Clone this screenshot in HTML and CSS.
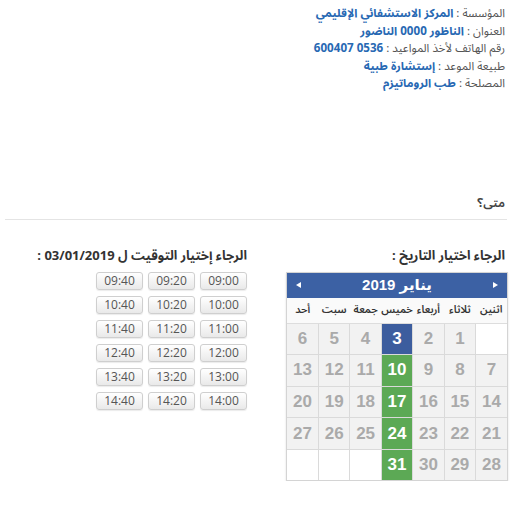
FILE: index.html
```html
<!DOCTYPE html>
<html lang="ar" dir="rtl">
<head>
<meta charset="utf-8">
<title>موعد</title>
<link rel="stylesheet" href="styles.css">
</head>
<body>
<div class="page">
  <div class="info">
    <div class="line"><span class="label">المؤسسة :</span> <span class="value">المركز الاستشفائي الإقليمي</span></div>
    <div class="line"><span class="label">العنوان :</span> <span class="value">الناظور 0000 الناضور</span></div>
    <div class="line"><span class="label">رقم الهاتف لأخذ المواعيد :</span> <span class="value">0536 600407</span></div>
    <div class="line"><span class="label">طبيعة الموعد :</span> <span class="value">إستشارة طبية</span></div>
    <div class="line"><span class="label">المصلحة :</span> <span class="value">طب الروماتيزم</span></div>
  </div>

  <h2 class="when">متى؟</h2>
  <hr class="sep">

  <div class="row">
    <div class="col-date">
      <div class="col-title">الرجاء اختيار التاريخ :</div>
      <div class="calendar">
        <div class="cal-head">
          <span class="arrow arrow-next"></span>
          <span class="cal-title">يناير 2019</span>
          <span class="arrow arrow-prev"></span>
        </div>
        <table class="cal-grid">
          <thead>
            <tr><th>اثنين</th><th>ثلاثاء</th><th>أربعاء</th><th>خميس</th><th>جمعة</th><th>سبت</th><th>أحد</th></tr>
          </thead>
          <tbody>
            <tr><td class="empty"></td><td>1</td><td>2</td><td class="sel">3</td><td>4</td><td>5</td><td>6</td></tr>
            <tr><td>7</td><td>8</td><td>9</td><td class="ok">10</td><td>11</td><td>12</td><td>13</td></tr>
            <tr><td>14</td><td>15</td><td>16</td><td class="ok">17</td><td>18</td><td>19</td><td>20</td></tr>
            <tr><td>21</td><td>22</td><td>23</td><td class="ok">24</td><td>25</td><td>26</td><td>27</td></tr>
            <tr><td>28</td><td>29</td><td>30</td><td class="ok">31</td><td class="empty"></td><td class="empty"></td><td class="empty"></td></tr>
          </tbody>
        </table>
      </div>
    </div>

    <div class="col-time">
      <div class="col-title">الرجاء إختيار التوقيت ل 03/01/2019 :</div>
      <div class="slots">
        <button class="slot">09:00</button><button class="slot">09:20</button><button class="slot">09:40</button>
        <button class="slot">10:00</button><button class="slot">10:20</button><button class="slot">10:40</button>
        <button class="slot">11:00</button><button class="slot">11:20</button><button class="slot">11:40</button>
        <button class="slot">12:00</button><button class="slot">12:20</button><button class="slot">12:40</button>
        <button class="slot">13:00</button><button class="slot">13:20</button><button class="slot">13:40</button>
        <button class="slot">14:00</button><button class="slot">14:20</button><button class="slot">14:40</button>
      </div>
    </div>
  </div>
</div>
</body>
</html>
```

FILE: styles.css
```css
html, body {
  margin: 0;
  padding: 0;
  background: #ffffff;
}

body {
  font-family: "Noto Sans Arabic", "DejaVu Sans", sans-serif;
  color: #333333;
}

.page {
  padding: 5px 14px 0 5px;
}

.info {
  font-size: 11.6px;
  line-height: 17.5px;
}

.info .label {
  color: #555555;
}

.info .value {
  color: #2768b3;
  font-weight: bold;
}

.when {
  margin: 100px 0 0 0;
  font-size: 12.5px;
  line-height: 20px;
  font-weight: 600;
  color: #444444;
}

.sep {
  margin: 6px -2px 0 0;
  border: 0;
  border-top: 1px solid #e4e4e4;
  height: 0;
}

.row {
  display: flex;
  gap: 13px;
  margin-top: 27px;
}

.col-date {
  width: 245px;
}

.col-time {
  flex: 1;
}

.col-title {
  font-size: 13px;
  line-height: 18px;
  font-weight: bold;
  color: #333333;
}

.calendar {
  margin-top: 7px;
  margin-right: -3px;
  margin-left: auto;
  width: 220px;
  border: 1px solid #d4d4d4;
  box-shadow: 0 1px 2px rgba(0, 0, 0, 0.12);
  background: #ffffff;
}

.cal-head {
  height: 25px;
  background: #3c61a4;
  display: flex;
  align-items: center;
  justify-content: space-between;
  padding: 0 9px;
  color: #ffffff;
}

.cal-title {
  font-family: "Liberation Sans", "DejaVu Sans", sans-serif;
  font-weight: bold;
  font-size: 15px;
}

.arrow {
  width: 0;
  height: 0;
  border-top: 3px solid transparent;
  border-bottom: 3px solid transparent;
}

.arrow-next {
  border-left: 5px solid #ffffff;
}

.arrow-prev {
  border-right: 5px solid #ffffff;
}

.cal-grid {
  width: 100%;
  border-collapse: collapse;
  table-layout: fixed;
}

.cal-grid th {
  height: 25px;
  padding: 0;
  font-size: 10.5px;
  font-weight: 600;
  color: #333333;
  background: #fafafa;
  border-bottom: 1px solid #dddddd;
  white-space: nowrap;
}

.cal-grid td {
  height: 30.6px;
  padding: 0;
  border: 1px solid #dadada;
  background: #f2f2f2;
  color: #aaaaaa;
  text-align: center;
  font-family: "Liberation Sans", Arial, sans-serif;
  font-weight: bold;
  font-size: 17px;
}

.cal-grid tr td:first-child {
  border-right: 0;
}

.cal-grid tr td:last-child {
  border-left: 0;
}

.cal-grid tbody tr:last-child td {
  border-bottom: 0;
}

.cal-grid td.empty {
  background: #ffffff;
}

.cal-grid td.sel {
  background: #3c5d9e;
  color: #ffffff;
}

.cal-grid td.ok {
  background: #5ca955;
  color: #ffffff;
}

.slots {
  margin-top: 7px;
  display: grid;
  grid-template-columns: repeat(3, 47px);
  column-gap: 5px;
  row-gap: 6px;
}

.slot {
  height: 18px;
  padding: 0;
  margin: 0;
  border: 1px solid #cfcfcf;
  border-radius: 3px;
  background: linear-gradient(#ffffff, #e9e9e9);
  box-shadow: 0 1px 1px rgba(0, 0, 0, 0.08);
  font-family: "Open Sans", "DejaVu Sans", sans-serif;
  font-size: 12px;
  line-height: 16px;
  color: #555555;
}
```
